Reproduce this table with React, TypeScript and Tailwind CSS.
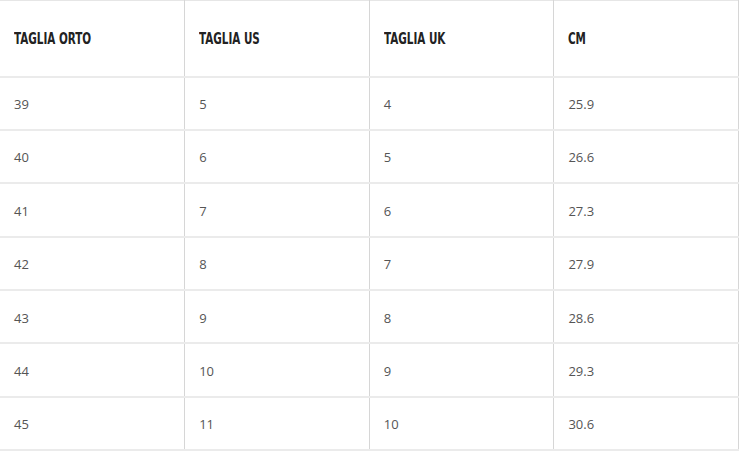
import React from 'react'

const headers = ['TAGLIA ORTO', 'TAGLIA US', 'TAGLIA UK', 'CM']

const rows = [
  ['39', '5', '4', '25.9'],
  ['40', '6', '5', '26.6'],
  ['41', '7', '6', '27.3'],
  ['42', '8', '7', '27.9'],
  ['43', '9', '8', '28.6'],
  ['44', '10', '9', '29.3'],
  ['45', '11', '10', '30.6'],
]

export default function App() {
  return (
    <div className="w-[740px] h-[452px] bg-white">
      <table className="w-[739px] table-fixed border-collapse">
        <thead>
          <tr className="h-[76px] border-t border-t-[#e6e6e6] border-b-2 border-b-[#ebebeb]">
            {headers.map((h, i) => (
              <th
                key={h}
                className={`text-left align-middle pl-[14px] pt-[3px] text-[16.5px] font-bold text-[#222] font-['DejaVu_Sans_Condensed','Liberation_Sans_Narrow',sans-serif] ${i > 0 ? 'border-l border-l-[#d6d6d6]' : ''} ${i === 3 ? 'border-r border-r-[#d6d6d6]' : ''}`}
              >
                <span className="inline-block origin-left scale-x-[0.7] whitespace-nowrap">{h}</span>
              </th>
            ))}
          </tr>
        </thead>
        <tbody>
          {rows.map((r, ri) => (
            <tr key={ri} className="h-[53.4px] border-b-2 border-b-[#ebebeb]">
              {r.map((c, i) => (
                <td
                  key={i}
                  className={`align-middle pl-[14px] pt-[3px] text-[13px] text-[#555] font-['Open_Sans',sans-serif] ${i > 0 ? 'border-l border-l-[#d6d6d6]' : ''} ${i === 3 ? 'border-r border-r-[#d6d6d6]' : ''}`}
                >
                  {c}
                </td>
              ))}
            </tr>
          ))}
        </tbody>
      </table>
    </div>
  )
}
